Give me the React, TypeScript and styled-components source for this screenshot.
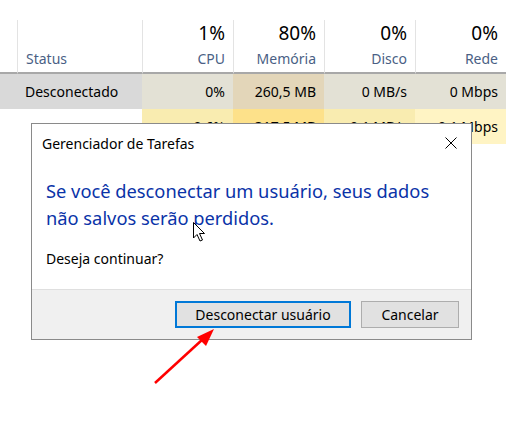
import React from "react";
import styled, { createGlobalStyle } from "styled-components";

const Global = createGlobalStyle`
  html, body { margin: 0; padding: 0; background: #fff; }
  body { font-family: "Noto Sans", "Open Sans", sans-serif; overflow: hidden; }
`;

const Page = styled.div`
  position: relative;
  width: 506px;
  height: 425px;
  overflow: hidden;
  background: #fff;
  padding-top: 20px;
  box-sizing: border-box;
`;

const Table = styled.div`
  display: grid;
  grid-template-columns: 17px 125px 91px 91px 91px 91px;
`;

const HeadCell = styled.div<{ $sep?: boolean }>`
  height: 54px;
  box-sizing: border-box;
  border-left: ${(p) => (p.$sep ? "1px solid #e3e3e3" : "none")};
  border-bottom: 2px solid #a8a8a8;
  display: flex;
  flex-direction: column;
  justify-content: space-between;
  align-items: flex-end;
  padding: 1px 8px 4px 8px;
`;

const StatusHead = styled(HeadCell)`
  align-items: flex-start;
  justify-content: flex-end;
`;

const Pct = styled.div`
  font-size: 19px;
  color: #000;
  line-height: 24px;
`;

const Label = styled.div`
  font-size: 14px;
  color: #4a5f85;
  line-height: 18px;
`;

const Cell = styled.div<{ $bg: string; $left?: boolean }>`
  height: 35px;
  background: ${(p) => p.$bg};
  display: flex;
  align-items: center;
  justify-content: ${(p) => (p.$left ? "flex-start" : "flex-end")};
  padding: 0 8px;
  font-size: 14px;
  color: #000;
  white-space: nowrap;
  overflow: hidden;
`;

const Dialog = styled.div`
  position: absolute;
  left: 31px;
  top: 123px;
  width: 441px;
  height: 217px;
  box-sizing: border-box;
  border: 1px solid #8a8a8a;
  background: #fff;
  display: flex;
  flex-direction: column;
`;

const TitleBar = styled.div`
  height: 38px;
  display: flex;
  align-items: center;
  justify-content: space-between;
  padding: 0 14px 0 10px;
  font-size: 14px;
  color: #000;
`;

const Body = styled.div`
  flex: 1;
  padding: 15px 14px 0 14px;
`;

const Instruction = styled.div`
  font-size: 18.3px;
  line-height: 27px;
  color: #0a33a8;
`;

const Question = styled.div`
  margin-top: 18px;
  font-size: 14px;
  color: #000;
`;

const Footer = styled.div`
  height: 50px;
  box-sizing: border-box;
  background: #f0f0f0;
  border-top: 1px solid #dfdfdf;
  display: flex;
  justify-content: flex-end;
  align-items: center;
  gap: 10px;
  padding: 0 12px 0 0;
`;

const Button = styled.button<{ $primary?: boolean }>`
  height: 27px;
  box-sizing: border-box;
  padding: 0;
  width: ${(p) => (p.$primary ? "176px" : "98px")};
  background: #e1e1e1;
  border: ${(p) => (p.$primary ? "2px solid #0078d7" : "1px solid #adadad")};
  font-family: inherit;
  font-size: 14px;
  color: #000;
`;

const Close = styled.svg`
  display: block;
`;

const Overlay = styled.svg`
  position: absolute;
  left: 0;
  top: 0;
  pointer-events: none;
`;

export default function App() {
  const heads = [
    ["1%", "CPU"],
    ["80%", "Memória"],
    ["0%", "Disco"],
    ["0%", "Rede"],
  ];
  return (
    <>
      <Global />
      <Page>
        <Table>
          <HeadCell />
          <StatusHead $sep>
            <Label>Status</Label>
          </StatusHead>
          {heads.map(([p, l]) => (
            <HeadCell $sep key={l}>
              <Pct>{p}</Pct>
              <Label>{l}</Label>
            </HeadCell>
          ))}
          <Cell $bg="#d9d9d9" />
          <Cell $bg="#d9d9d9" $left>
            Desconectado
          </Cell>
          <Cell $bg="#e3e1d5">0%</Cell>
          <Cell $bg="#e3d6b9">260,5 MB</Cell>
          <Cell $bg="#e3e1d5">0 MB/s</Cell>
          <Cell $bg="#e3e1d5">0 Mbps</Cell>
          <Cell $bg="#fff" />
          <Cell $bg="#fff" $left />
          <Cell $bg="#f9ecb0">0,6%</Cell>
          <Cell $bg="#fde18a">317,5 MB</Cell>
          <Cell $bg="#f9ecb0">0,1 MB/s</Cell>
          <Cell $bg="#fff4c4">0,1 Mbps</Cell>
        </Table>

        <Dialog>
          <TitleBar>
            <span>Gerenciador de Tarefas</span>
            <Close width="12" height="12" viewBox="0 0 12 12">
              <path d="M0.5 0.5 L11.5 11.5 M11.5 0.5 L0.5 11.5" stroke="#000" strokeWidth="1" />
            </Close>
          </TitleBar>
          <Body>
            <Instruction>
              Se você desconectar um usuário, seus dados
              <br />
              não salvos serão perdidos.
            </Instruction>
            <Question>Deseja continuar?</Question>
          </Body>
          <Footer>
            <Button $primary>Desconectar usuário</Button>
            <Button>Cancelar</Button>
          </Footer>
        </Dialog>

        <Overlay width="506" height="425" viewBox="0 0 506 425">
          <path
            d="M193.5 222.5 L193.5 238 L197 234.5 L200 241 L202.5 240 L199.5 233.5 L204.5 233.5 Z"
            fill="#fff"
            stroke="#000"
            strokeWidth="1"
            strokeLinejoin="miter"
          />
          <line x1="155" y1="383" x2="203" y2="339" stroke="#f00" strokeWidth="2.5" />
          <path d="M214 329 L197 337 L206 346 Z" fill="#f00" />
        </Overlay>
      </Page>
    </>
  );
}
